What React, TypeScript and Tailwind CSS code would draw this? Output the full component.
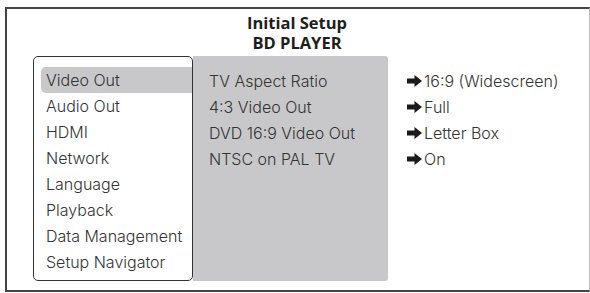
import React from "react";

const Arrow = () => (
  <svg width="15" height="12" viewBox="0 0 15 12" className="mr-[2px] shrink-0">
    <path d="M0 3.5 H7.5 V0 L15 6 L7.5 12 V8.5 H0 Z" fill="#1a1a1a" />
  </svg>
);

const menu = [
  "Video Out",
  "Audio Out",
  "HDMI",
  "Network",
  "Language",
  "Playback",
  "Data Management",
  "Setup Navigator",
];

const rows: [string, string][] = [
  ["TV Aspect Ratio", "16:9 (Widescreen)"],
  ["4:3 Video Out", "Full"],
  ["DVD 16:9 Video Out", "Letter Box"],
  ["NTSC on PAL TV", "On"],
];

export default function App() {
  return (
    <div className="w-[590px] h-[293px] bg-white pt-[7px] pl-[5px]">
      <div className="w-[585px] h-[285px] border-t-2 border-l-2 border-b-2 border-r border-t-[#444] border-l-[#444] border-b-[#444] border-r-[#bbb] flex flex-col">
        <div
          className="flex flex-col items-center pt-[4px] pr-[2px] text-[16.5px] leading-[20px] font-bold text-[#1e1e1e]"
          style={{ fontFamily: '"Open Sans", "Noto Sans", sans-serif' }}
        >
          <div>Initial Setup</div>
          <div>BD PLAYER</div>
        </div>
        <div
          className="flex mt-[3px] ml-[26px] h-[225px] text-[16px] font-light text-[#333]"
          style={{ fontFamily: 'Inter, Roboto, "Liberation Sans", sans-serif' }}
        >
          <div className="w-[160px] h-full border-[1.5px] border-[#333] rounded-[5px] pt-[10px] pl-[7px] bg-white">
            {menu.map((m, i) => (
              <div
                key={m}
                className={
                  "h-[26px] flex items-center pl-[5px] whitespace-nowrap " +
                  (i === 0 ? "bg-[#c8c8ca] rounded-l-[5px]" : "")
                }
              >
                {m}
              </div>
            ))}
          </div>
          <div className="w-[195px] h-full bg-[#c8c8ca] rounded-r-[3px] pt-[11.5px] pl-[16px]">
            {rows.map(([k]) => (
              <div key={k} className="h-[26px] flex items-center whitespace-nowrap">
                {k}
              </div>
            ))}
          </div>
          <div className="pt-[11.5px] pl-[19px]">
            {rows.map(([k, v]) => (
              <div key={k} className="h-[26px] flex items-center whitespace-nowrap">
                <Arrow />
                {v}
              </div>
            ))}
          </div>
        </div>
      </div>
    </div>
  );
}
